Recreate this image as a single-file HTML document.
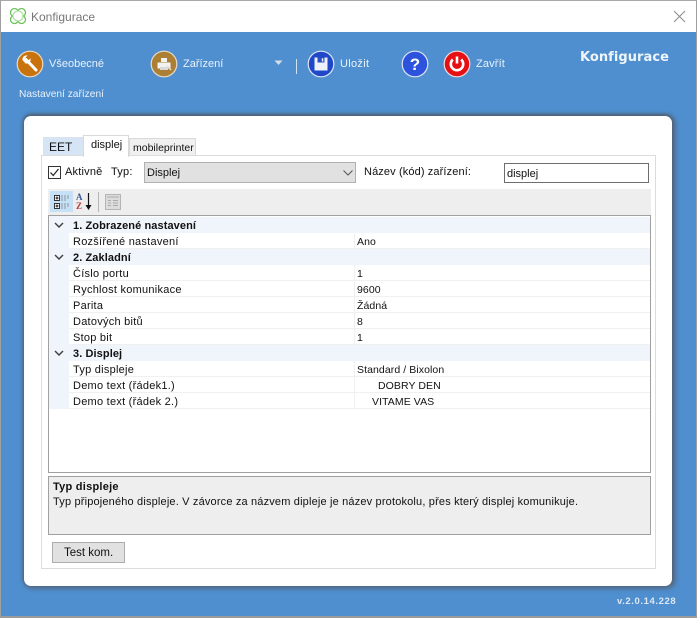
<!DOCTYPE html>
<html lang="cs"><head><meta charset="utf-8"><title>Konfigurace</title>
<style>
html,body{margin:0;padding:0;background:#fff}
#w{position:relative;width:697px;height:618px;overflow:hidden;font-family:"Liberation Sans",sans-serif;font-size:11px;color:#111;background:#4f8ecf}
#w div,#w span,#w svg{position:absolute;white-space:nowrap}
.t{line-height:14px}
.l{color:#e9f3fb;font-size:11px;line-height:14px}
.row{left:49px;width:601px;height:15px;border-bottom:1px solid #f0f0f0;background:#fff}
.g{left:49px;width:601px;height:16px;background:#f0f5fb}
.gut{left:0;top:0;width:20px;height:16px;background:#f0f5fb}
.k{left:24px;top:2px;line-height:14px;letter-spacing:.25px}
.v{left:308px;top:2px;line-height:14px;font-size:10.5px;letter-spacing:.08px}
.b{left:24px;top:2px;line-height:14px;font-weight:bold;letter-spacing:.09px}
.sep{left:305px;top:0;width:1px;height:16px;background:#f0f0f0}
</style></head><body>
<div id="w">
<div style="left:0;top:0;width:697px;height:32px;background:#fff"></div>
<div style="left:0;top:0;width:697px;height:1px;background:#a8a8a8"></div>
<div style="left:0;top:0;width:1px;height:618px;background:#a0a0a0"></div>
<div style="left:696px;top:0;width:1px;height:618px;background:#a0a0a0"></div>
<div style="left:0;top:616px;width:697px;height:2px;background:#9a9a9a"></div>
<svg style="left:9px;top:7px" width="18" height="18" viewBox="0 0 18 18"><g fill="#fff" stroke="#6cc35a" stroke-width="1.300"><circle cx="5.500" cy="5.500" r="4"/><circle cx="12.500" cy="5.500" r="4"/><circle cx="5.500" cy="12.500" r="4"/><circle cx="12.500" cy="12.500" r="4"/></g><circle cx="9" cy="9" r="5" fill="#fff" stroke="#a5dc98"/></svg>
<div class="t" style="left:31px;top:10px;font-size:12px;color:#777">Konfigurace</div>
<svg style="left:673px;top:10px" width="13" height="13" viewBox="0 0 13 13"><path d="M1 1L12 12M12 1L1 12" stroke="#8a8a8a" stroke-width="1" fill="none"/></svg>

<svg style="left:16px;top:50px" width="28" height="28" viewBox="0 0 28 28"><circle cx="14" cy="14" r="12.800" fill="#c9730f" stroke="#e8dcc8" stroke-width="1.200"/><path d="M10 9.500L20 20" stroke="#fff" stroke-width="3" stroke-linecap="round"/><path d="M6.500 10a4 4 0 0 1 5-4.500l-2.500 2.700 1 2 2.200.6 2.200-2.400a4 4 0 0 1-5 5z" fill="#fff"/></svg>
<div class="l" style="left:49px;top:57px">Všeobecné</div>
<svg style="left:150px;top:50px" width="28" height="28" viewBox="0 0 28 28"><circle cx="14" cy="14" r="12.800" fill="#ab8034" stroke="#e8dcc8" stroke-width="1.200"/><path d="M11 8h6v4h-6zM7.500 12.500h13v6h-13z" fill="#f2f2f2"/><path d="M10 17h8v3h-8z" fill="#d9d9d9"/><path d="M17 16l4 4" stroke="#ddd" stroke-width="1.500"/></svg>
<div class="l" style="left:183px;top:57px">Zařízení</div>
<svg style="left:274px;top:60px" width="9" height="6" viewBox="0 0 9 6"><path d="M0.500 0.500h8L4.500 5z" fill="#d8dde4"/></svg>
<div style="left:296px;top:59px;width:1px;height:15px;background:#cfe3f5"></div>
<svg style="left:307px;top:50px" width="28" height="28" viewBox="0 0 28 28"><circle cx="14" cy="14" r="12.800" fill="#1f48c8" stroke="#dfe6f5" stroke-width="1.200"/><path d="M7.500 7.500h13v13h-13z" fill="#eef1fa"/><path d="M10.500 7.500h7v5h-7z" fill="#2a50c4"/><path d="M14.800 8.300h1.500v3.200h-1.500z" fill="#eef1fa"/></svg>
<div class="l" style="left:340px;top:57px;letter-spacing:.3px">Uložit</div>
<svg style="left:401px;top:50px" width="28" height="28" viewBox="0 0 28 28"><circle cx="14" cy="14" r="12.800" fill="#2d52dc" stroke="#dfe6f5" stroke-width="1.200"/><text x="14" y="20" text-anchor="middle" font-family="Liberation Sans" font-weight="bold" font-size="17" fill="#fff">?</text></svg>
<svg style="left:443px;top:50px" width="28" height="28" viewBox="0 0 28 28"><circle cx="14" cy="14" r="12.800" fill="#e60f14" stroke="#f0dcdc" stroke-width="1.200"/><path d="M9.800 9.500a6.200 6.200 0 1 0 8.400 0" fill="none" stroke="#fff" stroke-width="2.600"/><path d="M14 6.500v7" stroke="#fff" stroke-width="2.600"/></svg>
<div class="l" style="left:476px;top:57px;letter-spacing:.15px">Zavřít</div>
<div class="t" style="left:580px;top:51px;font-family:'DejaVu Sans',sans-serif;font-weight:bold;font-size:13px;letter-spacing:.05px;color:#eef5fb">Konfigurace</div>
<div class="t" style="left:19px;top:88px;font-size:10.200px;color:#eaf3fb">Nastavení zařízení</div>

<div style="left:24px;top:116px;width:648px;height:470px;background:#fff;border-radius:7px;box-shadow:0 -1px 3px 1px #4d6075,2px 1px 4px 2px #55708e"></div>

<div style="left:41px;top:155px;width:613px;height:412px;background:#fff;border:1px solid #dcdcdc"></div>
<div style="left:43px;top:137px;width:40px;height:18px;background:#d5e5f5;border:1px solid #d9e4ee;border-bottom:0;box-sizing:border-box"></div>
<div class="t" style="left:49px;top:140px;font-size:12px">EET</div>
<div style="left:83px;top:135px;width:46px;height:22px;background:#fff;border:1px solid #d9d9d9;border-bottom:0;box-sizing:border-box"></div>
<div class="t" style="left:91px;top:138px">displej</div>
<div style="left:129px;top:138px;width:67px;height:17px;background:#f0f0f0;border:1px solid #d9d9d9;border-bottom:0;box-sizing:border-box"></div>
<div class="t" style="left:133px;top:141px;font-size:10.500px">mobileprinter</div>

<div style="left:48px;top:166px;width:13px;height:13px;border:1px solid #333;background:#fff;box-sizing:border-box"></div>
<svg style="left:48px;top:166px" width="13" height="13" viewBox="0 0 13 13"><path d="M2.500 6.500L5.200 9.500L10.500 3" fill="none" stroke="#222" stroke-width="1.200"/></svg>
<div class="t" style="left:65px;top:165px;letter-spacing:.2px">Aktivně</div>
<div class="t" style="left:111px;top:165px;letter-spacing:.2px">Typ:</div>
<div style="left:144px;top:162px;width:212px;height:21px;background:#e1e1e1;border:1px solid #b0b0b0;box-sizing:border-box"></div>
<div class="t" style="left:147px;top:166px">Displej</div>
<svg style="left:343px;top:170px" width="10" height="6" viewBox="0 0 10 6"><path d="M0.500 0.500L5 5L9.500 0.500" fill="none" stroke="#555"/></svg>
<div class="t" style="left:364px;top:165px;letter-spacing:.12px">Název (kód) zařízení:</div>
<div style="left:504px;top:163px;width:145px;height:20px;background:#fff;border:1px solid #6e6e6e;box-sizing:border-box"></div>
<div class="t" style="left:507px;top:167px">displej</div>

<div style="left:48px;top:189px;width:603px;height:26px;background:#eee"></div>
<div style="left:50px;top:191px;width:23px;height:21px;background:#c6e0f5"></div>
<svg style="left:53px;top:194px" width="18" height="16" viewBox="0 0 18 16"><g fill="#fff" stroke="#333"><rect x="1.500" y="1.500" width="5" height="5"/><rect x="1.500" y="9.500" width="5" height="5"/></g><path d="M2.500 4h3M4 2.500v3M2.500 12h3M4 10.500v3" stroke="#111"/><path d="M8 2h8M8 4h8M8 6h5M8 10h8M8 12h8M8 14h5" stroke="#8a97a5" stroke-dasharray="2 1"/></svg>
<div style="left:76px;top:193px;font:bold 9px/9px 'Liberation Serif',serif;color:#3a5a9c">A</div>
<div style="left:76px;top:202px;font:bold 9px/9px 'Liberation Serif',serif;color:#b23a3a">Z</div>
<svg style="left:85px;top:193px" width="7" height="18" viewBox="0 0 7 18"><path d="M3.500 0v14" stroke="#111" stroke-width="1.200"/><path d="M0.500 12h6l-3 5z" fill="#111"/></svg>
<div style="left:98px;top:192px;width:1px;height:20px;background:#b5b5b5"></div>
<svg style="left:105px;top:194px" width="16" height="16" viewBox="0 0 16 16"><rect x="0.500" y="0.500" width="15" height="15" fill="#dcdcdc" stroke="#b5b5b5"/><rect x="2" y="2" width="12" height="2" fill="#c4c4c4"/><path d="M3 6.500h3M8 6.500h5M3 9h3M8 9h5M3 11.500h3M8 11.500h5" stroke="#aaa"/></svg>

<div style="left:48px;top:215px;width:603px;height:258px;background:#fff;border:1px solid #a0a0a0;box-sizing:border-box"></div>
<div style="left:49px;top:216px;width:20px;height:193px;background:#f0f5fb"></div>

<div class="g" style="top:217px"><div class="b">1. Zobrazené nastavení</div></div>
<div class="row" style="top:233px"><div class="gut"></div><div class="k">Rozšířené nastavení</div><div class="sep"></div><div class="v">Ano</div></div>
<div class="g" style="top:249px"><div class="b">2. Zakladní</div></div>
<div class="row" style="top:265px"><div class="gut"></div><div class="k">Číslo portu</div><div class="sep"></div><div class="v">1</div></div>
<div class="row" style="top:281px"><div class="gut"></div><div class="k">Rychlost komunikace</div><div class="sep"></div><div class="v">9600</div></div>
<div class="row" style="top:297px"><div class="gut"></div><div class="k">Parita</div><div class="sep"></div><div class="v">Žádná</div></div>
<div class="row" style="top:313px"><div class="gut"></div><div class="k">Datových bitů</div><div class="sep"></div><div class="v">8</div></div>
<div class="row" style="top:329px"><div class="gut"></div><div class="k">Stop bit</div><div class="sep"></div><div class="v">1</div></div>
<div class="g" style="top:345px"><div class="b">3. Displej</div></div>
<div class="row" style="top:361px"><div class="gut"></div><div class="k">Typ displeje</div><div class="sep"></div><div class="v">Standard / Bixolon</div></div>
<div class="row" style="top:377px"><div class="gut"></div><div class="k">Demo text (řádek1.)</div><div class="sep"></div><div class="v" style="left:329px">DOBRY DEN</div></div>
<div class="row" style="top:393px"><div class="gut"></div><div class="k">Demo text (řádek 2.)</div><div class="sep"></div><div class="v" style="left:323px">VITAME VAS</div></div>
<svg style="left:54px;top:222px" width="10" height="6" viewBox="0 0 10 6"><path d="M1 1L5 5L9 1" fill="none" stroke="#444" stroke-width="1.500"/></svg>
<svg style="left:54px;top:254px" width="10" height="6" viewBox="0 0 10 6"><path d="M1 1L5 5L9 1" fill="none" stroke="#444" stroke-width="1.500"/></svg>
<svg style="left:54px;top:350px" width="10" height="6" viewBox="0 0 10 6"><path d="M1 1L5 5L9 1" fill="none" stroke="#444" stroke-width="1.500"/></svg>

<div style="left:48px;top:476px;width:603px;height:59px;background:#eee;border:1px solid #a0a0a0;box-sizing:border-box"></div>
<div class="t" style="left:53px;top:480px;font-weight:bold;letter-spacing:.25px">Typ displeje</div>
<div class="t" style="left:53px;top:495px;letter-spacing:.17px">Typ připojeného displeje. V závorce za názvem dipleje je název protokolu, přes který displej komunikuje.</div>
<div style="left:52px;top:542px;width:73px;height:21px;background:#e1e1e1;border:1px solid #adadad;box-sizing:border-box"></div>
<div class="t" style="left:64px;top:546px;font-size:11.500px">Test kom.</div>
<div class="t" style="left:617px;top:595px;font-size:9.500px;font-weight:bold;color:#dbe8f4;letter-spacing:.6px">v.2.0.14.228</div>
</div>
</body></html>
